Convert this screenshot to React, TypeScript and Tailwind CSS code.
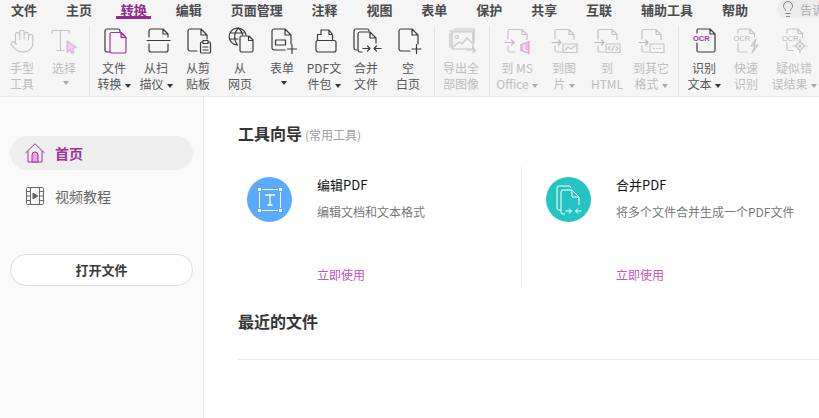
import React from "react";
import { Hand, Lightbulb } from "lucide-react";

const D = "#3a3a3a";
const G = "#c4c4c4";
const P = "#a0329c";

function Ic({ children }: { children: React.ReactNode }) {
  return (
    <svg width="32" height="30" viewBox="0 0 32 30" fill="none" strokeWidth="1.2" strokeLinecap="round" strokeLinejoin="round" className="block">
      {children}
    </svg>
  );
}

const Plus = ({ x, y, c = D }: { x: number; y: number; c?: string }) => (
  <path d={`M${x - 4.5} ${y}h9M${x} ${y - 4.5}v9`} stroke={c} />
);

const SubDoc = () => (
  <path d="M7 13V5a1.5 1.5 0 0 1 1.5-1.5H21L26 8.500v5M21 3.500V8.500H26M7 20v4.500A1.500 1.500 0 0 0 8.500 26H14" stroke={G} />
);
const ArrowIn = () => <path d="M4 16.500h9M10.500 14l2.500 2.500L10.500 19" stroke="#b9b9b9" />;

const icons: Record<string, React.ReactNode> = {
  convert: (
    <Ic>
      <path d="M11.500 26H9a2 2 0 0 1-2-2V5a2 2 0 0 1 2-2h11a2 2 0 0 1 2 2v1" stroke={D} />
      <path d="M13.500 6.500H23L28 11.500V25.500a1.500 1.500 0 0 1-1.500 1.500h-13A1.500 1.500 0 0 1 12 25.500V8a1.500 1.500 0 0 1 1.500-1.500z" stroke={P} />
      <path d="M23 6.500L28 11.500H23z" fill="#e2b8e0" stroke={P} />
    </Ic>
  ),
  scan: (
    <Ic>
      <path d="M9 11V5a2 2 0 0 1 2-2h12l5 5v3M23 3v5h5M7 14.500h23M9 18v6a2 2 0 0 0 2 2h15a2 2 0 0 0 2-2v-6" stroke={D} />
    </Ic>
  ),
  clip: (
    <Ic>
      <path d="M15 25H8a2 2 0 0 1-2-2V5a2 2 0 0 1 2-2h11l6 6v4M19 3v6h6" stroke={D} />
      <rect x="18.500" y="16" width="10" height="11" rx="1" stroke={D} />
      <rect x="21" y="14.500" width="5" height="3" fill="#f5f5f5" stroke={D} />
      <path d="M21 21h5M21 24h5" stroke={D} />
    </Ic>
  ),
  web: (
    <Ic>
      <path d="M13 19a8.500 8.500 0 1 1 9-10M6.500 7h13M6 13h8M14.500 2c-5 5-5 12-1 17M14.500 2c2.500 2 3.500 4 4 7" stroke={D} />
      <path d="M16 11.500a1.500 1.500 0 0 1 1.500-1.500H25l4 4v10.500a1.500 1.500 0 0 1-1.500 1.500h-10a1.500 1.500 0 0 1-1.500-1.500zM24.500 10v4.500H29" stroke={D} fill="#f5f5f5" />
    </Ic>
  ),
  form: (
    <Ic>
      <path d="M19 24H8a2 2 0 0 1-2-2V5a2 2 0 0 1 2-2h11l6 6v9M19 3v6h6" stroke={D} />
      <rect x="9.500" y="14" width="10" height="5" stroke={D} />
      <Plus x={26} y={23} />
    </Ic>
  ),
  pack: (
    <Ic>
      <path d="M9.500 14V8.500h3.500V4h8l3.500 4.500V14M21 4v4.500h3.500" stroke={D} />
      <path d="M8 16.500a2 2 0 0 1 2-2h16a2 2 0 0 1 2 2V24a2 2 0 0 1-2 2H10a2 2 0 0 1-2-2z" stroke={D} />
    </Ic>
  ),
  merge: (
    <Ic>
      <path d="M7 24H6a2 2 0 0 1-2-2V5a2 2 0 0 1 2-2h11a2 2 0 0 1 2 2" stroke={D} />
      <path d="M12 26H10a2 2 0 0 1-2-2V8a2 2 0 0 1 2-2h10l6 6v5M20 6v6h6" stroke={D} />
      <path d="M13 22.500h7M17.500 20l2.500 2.500-2.500 2.500M31 22.500h-7M26.500 20L24 22.500l2.500 2.500" stroke={D} />
    </Ic>
  ),
  blank: (
    <Ic>
      <path d="M18 25H9a2 2 0 0 1-2-2V5a2 2 0 0 1 2-2h11l6 6v9M20 3v6h6" stroke={D} />
      <Plus x={24.500} y={23} />
    </Ic>
  ),
  exportImg: (
    <Ic>
      <path d="M5 21V7M9 3h20v14M5 5h23" stroke={G} />
      <rect x="7" y="6" width="21" height="17" rx="1" stroke={G} />
      <circle cx="12" cy="11" r="1.500" stroke={G} />
      <path d="M8 21l6-5 3 2 5-6 5 5M22 24h8M28 22l2.500 2.500-2.500 2" stroke={G} />
    </Ic>
  ),
  ms: (
    <Ic>
      <SubDoc />
      <path d="M4 16.500h9M10.500 14l2.500 2.500L10.500 19" stroke="#d9a6d6" />
      <path d="M20 18.500l8-3v12l-8-3z" fill="#e8bfe6" stroke="#d9a6d6" />
      <path d="M23 19v5l3 1" stroke="#fff" />
    </Ic>
  ),
  img: (
    <Ic>
      <SubDoc />
      <ArrowIn />
      <rect x="15" y="18" width="14" height="8.500" stroke={G} />
      <path d="M17 24l3-3 3 2 4-3" stroke={G} />
    </Ic>
  ),
  html: (
    <Ic>
      <SubDoc />
      <ArrowIn />
      <rect x="15" y="18" width="14" height="8.500" stroke={G} />
      <path d="M19 20.500l-2 1.800 2 1.800M25 20.500l2 1.800-2 1.800M23 20l-2 4.500" stroke={G} />
    </Ic>
  ),
  other: (
    <Ic>
      <SubDoc />
      <ArrowIn />
      <rect x="15" y="18" width="14" height="8.500" stroke={G} />
      <path d="M18.500 22.500h1M21.500 22.500h1M24.500 22.500h1" stroke={G} />
    </Ic>
  ),
  ocr: (
    <Ic>
      <path d="M9 7V4.500A1.500 1.500 0 0 1 10.500 3H22l5 5v16.500a1.500 1.500 0 0 1-1.500 1.500h-15A1.500 1.500 0 0 1 9 24.500V17M22 3v5h5" stroke={D} />
      <text x="5" y="15" fontFamily="'Liberation Sans',sans-serif" fontSize="7.500" fontWeight="700" fill={P}>OCR</text>
    </Ic>
  ),
  ocrFast: (
    <Ic>
      <path d="M8 7V4.500A1.500 1.500 0 0 1 9.500 3H20l4.500 4.500V11M20 3v4.500h4.500M8 17v7.500A1.500 1.500 0 0 0 9.500 26H17" stroke={G} />
      <text x="3.500" y="15" fontFamily="'Liberation Sans',sans-serif" fontSize="7.500" fill="#b5b5b5">OCR</text>
      <path d="M26 13l-5 7h4l-3 7 6-8h-4z" stroke={G} />
    </Ic>
  ),
  ocrWarn: (
    <Ic>
      <path d="M9 7V4.500A1.500 1.500 0 0 1 10.500 3H20l4.500 4.500V12M20 3v4.500h4.500M9 17v6a1.500 1.500 0 0 0 1.500 1.500H15" stroke={G} />
      <text x="4" y="15" fontFamily="'Liberation Sans',sans-serif" fontSize="7.500" fill="#b5b5b5">OCR</text>
      <path d="M22 15.500l4.500 4.500-4.500 4.500-4.500-4.500zM22 13v2M22 25v2M15 20h2M27 20h2" stroke={G} />
      <circle cx="22" cy="20" r="1" stroke={G} />
    </Ic>
  ),
  select: (
    <Ic>
      <path d="M4 4.500h17M4 4.500v3M21 4.500v3M12.500 4.500v20M9 24.500h7" stroke={G} />
      <path d="M19 15l9.500 6.500-4 1 1.500 4-2 1-2-4-3 3z" fill="#ecd2ea" stroke="#dcb3d9" />
    </Ic>
  ),
};

const Caret = ({ light }: { light?: boolean }) => (
  <span
    className={`inline-block ml-[3px] align-middle w-0 h-0 border-l-[3px] border-r-[3px] border-t-[4px] border-l-transparent border-r-transparent ${
      light ? "border-t-[#aaaaaa]" : "border-t-[#333333]"
    }`}
  />
);

type ColProps = { icon: React.ReactNode; l1: string; l2?: string; caret?: "l2" | "below"; off?: boolean; className?: string };

function Col({ icon, l1, l2, caret, off, className = "" }: ColProps) {
  return (
    <div className={`w-[42px] shrink-0 flex flex-col items-center whitespace-nowrap ${off ? "text-[#bdbdbd]" : "text-[#555555]"} ${className}`}>
      <div className="h-[31px] flex items-center justify-center">{icon}</div>
      <div className="mt-[4px] text-[12px] leading-[16px]">{l1}</div>
      {l2 && (
        <div className="text-[12px] leading-[16px]">
          {l2}
          {caret === "l2" && <Caret light={off} />}
        </div>
      )}
      {caret === "below" && (
        <div className="leading-[16px] flex items-center h-[14px]">
          <Caret light={off} />
        </div>
      )}
    </div>
  );
}

const Sep = ({ className = "" }: { className?: string }) => <div className={`w-px h-[70px] bg-[#e4e4e4] shrink-0 ${className}`} />;

const menus = ["文件", "主页", "转换", "编辑", "页面管理", "注释", "视图", "表单", "保护", "共享", "互联", "辅助工具", "帮助"];

export default function App() {
  return (
    <div
      className="w-[819px] h-[418px] overflow-hidden bg-white flex flex-col"
      style={{ fontFamily: '"Noto Sans CJK SC","Liberation Sans",sans-serif' }}
    >
      <div className="h-[97px] shrink-0 bg-[#f5f5f5] border-b border-[#e6e6e6] flex flex-col">
        <div className="h-[22px] relative flex items-start gap-[28.9px] pl-[11px] pt-[1px] text-[13px] leading-[17px] font-bold text-[#4a4a4a] whitespace-nowrap">
          {menus.map((m) => (
            <div key={m} className={m === "转换" ? "relative text-[#8f2b8c]" : "relative"}>
              {m}
              {m === "转换" && <div className="absolute left-[-5px] right-[-4px] top-[15px] h-[3px] bg-[#8f2b8c]" />}
            </div>
          ))}
          <div className="absolute left-[777px] top-0 w-[42px] h-[18px] bg-[#ececec] rounded-l-full flex items-center pl-[2px] gap-[3px] overflow-hidden font-normal text-[12px] text-[#aaaaaa]">
            <Lightbulb size={18} strokeWidth={1.2} color="#777777" className="shrink-0" />
            <span>告诉我</span>
          </div>
        </div>
        <div className="flex items-start pt-[4px]">
          <Col off icon={<Hand size={26} strokeWidth={1} color="#c4c4c4" />} l1="手型" l2="工具" className="ml-[1px]" />
          <Col off icon={icons.select} l1="选择" caret="below" />
          <Sep className="ml-[4px] mt-[1px]" />
          <Col icon={icons.convert} l1="文件" l2="转换" caret="l2" className="ml-[3px]" />
          <Col icon={icons.scan} l1="从扫" l2="描仪" caret="l2" />
          <Col icon={icons.clip} l1="从剪" l2="贴板" />
          <Col icon={icons.web} l1="从" l2="网页" />
          <Col icon={icons.form} l1="表单" caret="below" />
          <Col icon={icons.pack} l1="PDF文" l2="件包" caret="l2" />
          <Col icon={icons.merge} l1="合并" l2="文件" />
          <Col icon={icons.blank} l1="空" l2="白页" />
          <Sep className="ml-[5px] mt-[1px]" />
          <Col off icon={icons.exportImg} l1="导出全" l2="部图像" className="ml-[5px]" />
          <Sep className="ml-[7px] mt-[1px]" />
          <Col off icon={icons.ms} l1="到 MS" l2="Office" caret="l2" className="ml-[6px]" />
          <Col off icon={icons.img} l1="到图" l2="片" caret="l2" className="ml-[5px]" />
          <Col off icon={icons.html} l1="到" l2="HTML" className="ml-[1px]" />
          <Col off icon={icons.other} l1="到其它" l2="格式" caret="l2" className="ml-[2px]" />
          <Sep className="ml-[6px] mt-[1px]" />
          <Col icon={icons.ocr} l1="识别" l2="文本" caret="l2" className="ml-[4px]" />
          <Col off icon={icons.ocrFast} l1="快速" l2="识别" />
          <Col off icon={icons.ocrWarn} l1="疑似错" l2="误结果" caret="l2" className="ml-[6px]" />
        </div>
      </div>

      <div className="flex-1 flex min-h-0">
        <aside className="w-[204px] shrink-0 bg-[#fafafa] border-r border-[#ebebeb] px-[10px] pt-[39px] flex flex-col">
          <div className="h-[34px] w-[183px] rounded-full bg-[#eeeeee] flex items-center pl-[15px] gap-[10px] text-[14px] font-bold text-[#9c2f98]">
            <svg width="20" height="20" viewBox="0 0 20 20" fill="none" stroke={P} strokeWidth="1" className="shrink-0">
              <path d="M0.500 10L10 0.800 19.500 10M3 8v11h14V8" />
              <path d="M7 19v-7a3 3 0 0 1 6 0v7z" fill="#e5a6e2" />
            </svg>
            首页
          </div>
          <div className="h-[34px] w-[183px] mt-[9px] flex items-center pl-[16px] gap-[11px] text-[14px] text-[#666666]">
            <svg width="18" height="18" viewBox="0 0 18 18" fill="none" stroke="#666666" strokeWidth="1" className="shrink-0">
              <rect x="0.500" y="0.500" width="17" height="17" rx="1" />
              <path d="M4.500 0.500v17M13.500 0.500v17M0.500 4.500h4M0.500 9h4M0.500 13.500h4M13.500 4.500h4M13.500 9h4M13.500 13.500h4" />
              <path d="M7 6l5 3-5 3z" fill="#666666" />
            </svg>
            视频教程
          </div>
          <div className="h-[32px] w-[183px] mt-[41px] rounded-full bg-white border border-[#dddddd] flex items-center justify-center text-[13px] font-bold text-[#3a3a3a]">
            打开文件
          </div>
        </aside>

        <main className="flex-1 min-w-0 pl-[34px] pt-[24px]">
          <div className="flex items-baseline h-[24px] whitespace-nowrap">
            <span className="text-[16px] font-bold text-[#333333]">工具向导</span>
            <span className="ml-[3px] text-[12px] text-[#a0a0a0]">(常用工具)</span>
          </div>
          <div className="flex mt-[22px] h-[119px]">
            <Card
              className="w-[284px] border-r border-[#ececec] pl-[9px]"
              color="bg-[#5aaaff]"
              title="编辑PDF"
              desc="编辑文档和文本格式"
              icon={
                <svg width="26" height="26" viewBox="0 0 26 26" fill="none" stroke="#ffffff" strokeWidth="1">
                  <path d="M5 2.500h16M5 23.500h16M2.500 5v16M23.500 5v16" />
                  <path d="M8 8h10M13 8v10M10.500 18h5" strokeWidth="1.300" />
                  <g fill="#ffffff" stroke="none">
                    <rect x="1" y="1" width="3" height="3" />
                    <rect x="22" y="1" width="3" height="3" />
                    <rect x="1" y="22" width="3" height="3" />
                    <rect x="22" y="22" width="3" height="3" />
                  </g>
                </svg>
              }
            />
            <Card
              className="pl-[24px]"
              color="bg-[#26c3c3]"
              title="合并PDF"
              desc="将多个文件合并生成一个PDF文件"
              icon={
                <svg width="26" height="32" viewBox="0 0 26 32" fill="none" stroke="#ffffff" strokeWidth="1">
                  <path d="M4.500 26H3a2 2 0 0 1-2-2V4a2 2 0 0 1 2-2h10a2 2 0 0 1 2 2" />
                  <path d="M9 30H7a2 2 0 0 1-2-2V8a2 2 0 0 1 2-2h9l7 7v8M16 6v7h7" />
                  <path d="M9.500 27h6M13 24.500l2.500 2.500-2.500 2.500M25.500 27h-6M22 24.500L19.500 27l2.500 2.500" />
                </svg>
              }
            />
          </div>
          <div className="mt-[23px] text-[16px] leading-[24px] font-bold text-[#333333]">最近的文件</div>
          <div className="mt-[26px] h-px bg-[#ececec]" />
        </main>
      </div>
    </div>
  );
}

function Card({ className, color, title, desc, icon }: { className: string; color: string; title: string; desc: string; icon: React.ReactNode }) {
  return (
    <div className={`shrink-0 flex items-start whitespace-nowrap ${className}`}>
      <div className={`w-[45px] h-[45px] mt-[10px] rounded-full flex items-center justify-center shrink-0 ${color}`}>{icon}</div>
      <div className="ml-[25px] flex flex-col">
        <div className="text-[13px] leading-[18px] mt-[9px] text-[#111111]">{title}</div>
        <div className="text-[12px] leading-[18px] mt-[9px] text-[#777777]">{desc}</div>
        <div className="text-[12px] leading-[18px] mt-[45px] text-[#c254c4]">立即使用</div>
      </div>
    </div>
  );
}
